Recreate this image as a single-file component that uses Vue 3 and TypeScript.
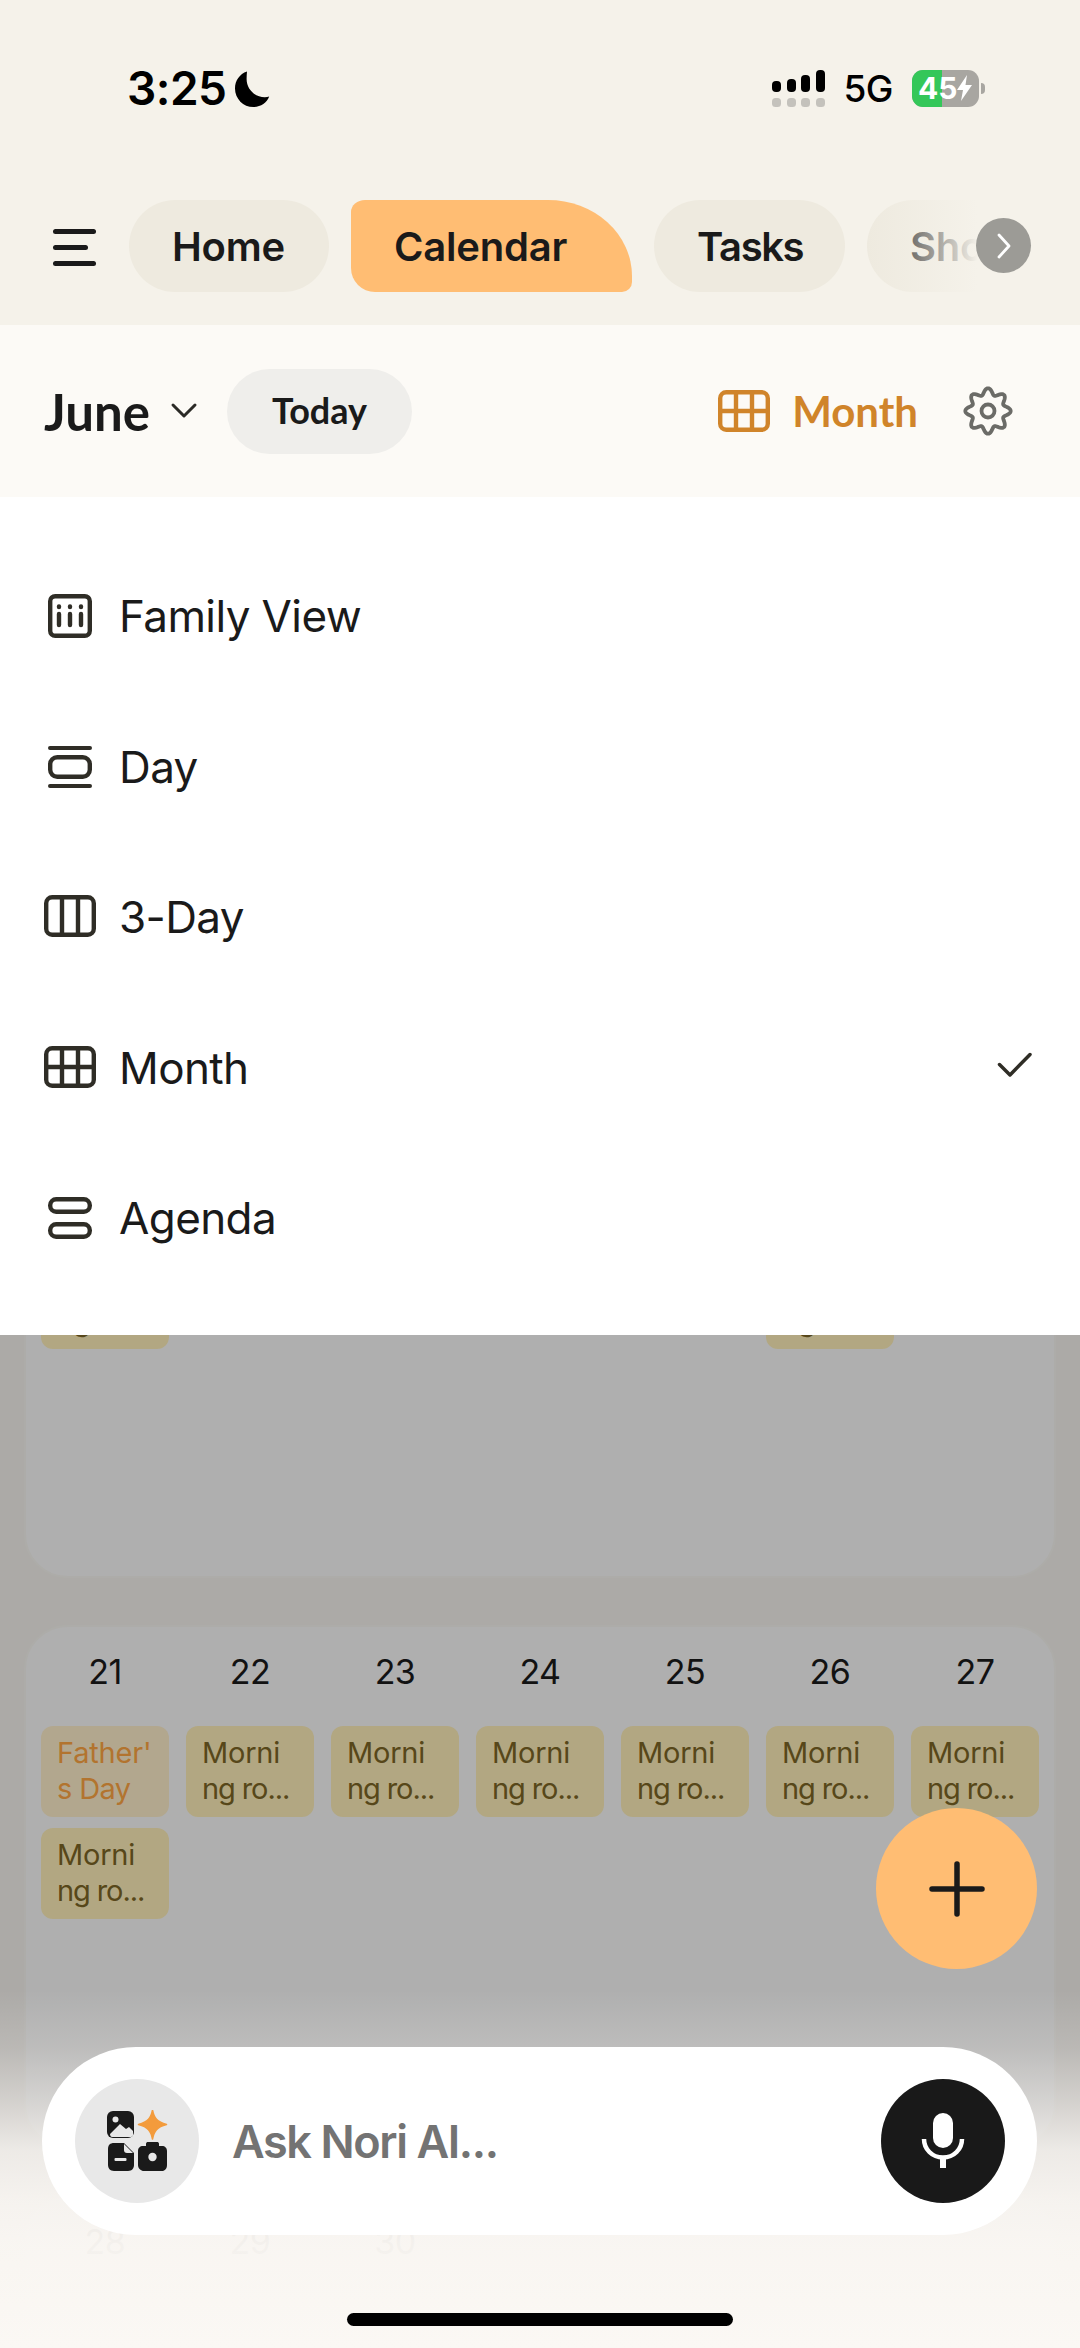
<script setup lang="ts">
const tabs = [
  { label: 'Home', cls: 'tab-home' },
  { label: 'Calendar', cls: 'tab-active' },
  { label: 'Tasks', cls: 'tab-tasks' },
]
const views = [
  { label: 'Family View', icon: 'family' },
  { label: 'Day', icon: 'day' },
  { label: '3-Day', icon: 'three' },
  { label: 'Month', icon: 'month', checked: true },
  { label: 'Agenda', icon: 'agenda' },
]
type Ev = { text: [string, string]; holiday?: boolean } | null
const morning: Ev = { text: ['Morni', 'ng ro...'] }
const fathers: Ev = { text: ["Father'", 's Day'], holiday: true }
const none: Ev[] = [null, null, null, null, null, null, null]
const weeks: { id: number; days: number[]; rows: Ev[][] }[] = [
  {
    id: 14,
    days: [],
    rows: [none, [morning, null, null, null, null, morning, null]],
  },
  {
    id: 21,
    days: [21, 22, 23, 24, 25, 26, 27],
    rows: [
      [fathers, morning, morning, morning, morning, morning, morning],
      [morning, null, null, null, null, null, null],
    ],
  },
  { id: 28, days: [28, 29, 30], rows: [] },
]

const gearPath = (() => {
  const pts: string[] = []
  for (let i = 0; i < 160; i++) {
    const a = (i / 160) * Math.PI * 2
    const r = 19.6 + 3.1 * Math.cos(8 * a)
    pts.push(`${(25 + r * Math.sin(a)).toFixed(2)} ${(25 - r * Math.cos(a)).toFixed(2)}`)
  }
  return `M${pts.join('L')}Z`
})()
</script>

<template>
  <div class="screen">
    <header class="top">
      <div class="status">
        <div class="status-left">
          <span class="time">3:25</span>
          <svg class="moon" width="36" height="38" viewBox="0 0 36 38">
            <path d="M13 1.5C5.6 4 1 10.6 1 18.4 1 28.6 9.2 37 19.4 37c7.3 0 13.4-4 15.8-10.4-1.3.4-2.8.6-4.3.6C20.8 27.2 12.6 19.2 12.6 9c0-2.700.2-5.200.4-7.500z" fill="#000" />
          </svg>
        </div>
        <div class="status-right">
          <svg class="signal" width="53" height="37" viewBox="0 0 53 37">
            <rect x="0" y="11" width="9" height="11" rx="4" fill="#000" />
            <rect x="15" y="9" width="9" height="13" rx="4" fill="#000" />
            <rect x="29" y="5" width="9" height="17" rx="4" fill="#000" />
            <rect x="44" y="0" width="9" height="22" rx="4" fill="#000" />
            <rect x="0" y="28" width="9" height="9" rx="3.5" fill="#c4c2bc" />
            <rect x="15" y="28" width="9" height="9" rx="3.5" fill="#c4c2bc" />
            <rect x="29" y="28" width="9" height="9" rx="3.5" fill="#c4c2bc" />
            <rect x="44" y="28" width="9" height="9" rx="3.5" fill="#c4c2bc" />
          </svg>
          <span class="net">5G</span>
          <div class="battery">
            <span class="batt-fill"></span>
            <span class="batt-num">45</span>
            <svg class="bolt" width="15" height="26" viewBox="0 0 15 26">
              <path d="M10 0 0 15h6l-2 11L15 10H8.5z" fill="#fff" />
            </svg>
            <span class="batt-cap"></span>
          </div>
        </div>
      </div>
      <nav class="tabs">
        <button class="menu-btn" aria-label="Menu">
          <span></span><span class="short"></span><span></span>
        </button>
        <div v-for="t in tabs" :key="t.label" class="tab" :class="t.cls">{{ t.label }}</div>
        <div class="tab tab-more">Shop</div>
        <div class="tab-fade"></div>
        <div class="tab-next">
          <svg width="16" height="28" viewBox="0 0 16 28">
            <path d="M3 3l10 11L3 25" fill="none" stroke="#fff" stroke-width="2.8" stroke-linecap="round" stroke-linejoin="round" />
          </svg>
        </div>
      </nav>
    </header>

    <section class="subbar">
      <div class="month-pick">
        <span class="month-name">June</span>
        <svg width="28" height="18" viewBox="0 0 28 18">
          <path d="M3 3l11 11L25 3" fill="none" stroke="#2b2a26" stroke-width="3" stroke-linecap="round" stroke-linejoin="round" />
        </svg>
      </div>
      <div class="today">Today</div>
      <div class="spacer"></div>
      <div class="view-pick">
        <svg width="52" height="42" viewBox="0 0 52 42">
          <g fill="none" stroke="#d0842a" stroke-width="4.4">
            <rect x="2.2" y="2.2" width="47.6" height="37.6" rx="6" />
            <path d="M18 2v38M34 2v38M2 21h48" />
          </g>
        </svg>
        <span>Month</span>
      </div>
      <svg class="gear" width="50" height="50" viewBox="0 0 50 50">
        <g fill="none" stroke="#6b6b67" stroke-width="3.8" stroke-linejoin="round">
          <path :d="gearPath" />
          <circle cx="25" cy="25" r="6.5" />
        </g>
      </svg>
    </section>

    <main class="calendar">
      <div v-for="w in weeks" :key="w.id" class="week">
        <div class="dates">
          <span v-for="d in w.days" :key="d" class="date">{{ d }}</span>
        </div>
        <div v-for="(row, ri) in w.rows" :key="ri" class="ev-row">
          <template v-for="(ev, ci) in row" :key="ci">
            <div v-if="ev" class="event" :class="{ holiday: ev.holiday }">
              <span>{{ ev.text[0] }}</span><span class="tail">{{ ev.text[1] }}</span>
            </div>
            <div v-else></div>
          </template>
        </div>
      </div>
    </main>

    <div class="scrim"></div>

    <ul class="view-menu">
      <li v-for="v in views" :key="v.label" class="view-row">
        <span class="view-icon">
          <svg width="52" height="44" viewBox="0 0 52 44">
            <g fill="none" stroke="#2f2d26" stroke-width="4.4">
              <template v-if="v.icon === 'family'">
                <rect x="6.2" y="2.2" width="39.6" height="39.6" rx="5" />
                <path d="M15 20v11M26 20v11M37 20v11" stroke-linecap="round" />
                <path d="M15 12.5v.5M26 12.5v.5M37 12.5v.5" stroke-linecap="round" />
              </template>
              <template v-else-if="v.icon === 'day'">
                <path d="M6 3h40M6 41h40" stroke-linecap="round" stroke-width="4" />
                <rect x="6.2" y="12.2" width="39.6" height="19.6" rx="7" />
              </template>
              <template v-else-if="v.icon === 'three'">
                <rect x="2.2" y="2.2" width="47.6" height="37.6" rx="6" />
                <path d="M18 2v38M34 2v38" />
              </template>
              <template v-else-if="v.icon === 'month'">
                <rect x="2.2" y="2.2" width="47.6" height="37.6" rx="6" />
                <path d="M18 2v38M34 2v38M2 21h48" />
              </template>
              <template v-else>
                <rect x="6.2" y="3.2" width="39.6" height="12.6" rx="6" />
                <rect x="6.2" y="28.2" width="39.6" height="12.6" rx="6" />
              </template>
            </g>
          </svg>
        </span>
        <span class="view-label">{{ v.label }}</span>
        <svg v-if="v.checked" class="check" width="36" height="28" viewBox="0 0 36 28">
          <path d="M2.5 13.5 13 24 33 3.5" fill="none" stroke="#2f2d26" stroke-width="3.5" stroke-linecap="round" stroke-linejoin="round" />
        </svg>
      </li>
    </ul>

    <button class="fab" aria-label="Add">
      <svg width="56" height="56" viewBox="0 0 56 56">
        <path d="M28 3v50M3 28h50" stroke="#1a1a1a" stroke-width="5.5" stroke-linecap="round" />
      </svg>
    </button>

    <div class="fade"></div>

    <div class="ask">
      <div class="ask-tools">
        <svg width="62" height="62" viewBox="0 0 62 62">
          <rect x="1" y="1" width="27" height="27" rx="6" fill="#1a1a1a" />
          <circle cx="9.5" cy="9.5" r="3" fill="#e8e8e8" />
          <path d="M4 24l10-10 6 5 3-2 4 4v4c0 1-1 2-2 2H6c-1 0-2-1-2-3z" fill="#e8e8e8" />
          <path d="M46.5 0c1.500 8 4.500 12 14 14.500-9.500 2.500-12.500 6.500-14 14.500-1.500-8-4.500-12-14-14.500 9.500-2.500 12.500-6.500 14-14.500z" fill="#f39b3c" stroke="#f39b3c" stroke-width="1.5" stroke-linejoin="round" />
          <path d="M8 33h10l10 10v12c0 3-2 6-6 6H8c-4 0-6-3-6-6V39c0-4 2-6 6-6z" fill="#1a1a1a" />
          <path d="M18 34v6c0 2 1 3 3 3h6z" fill="#e8e8e8" />
          <rect x="8.5" y="48" width="12" height="3" rx="1" fill="#e8e8e8" />
          <path d="M40 34c0-1.500 1-2 2-2h9c1 0 2 .5 2 2v2h3c3 0 5 2 5 5v14c0 3.500-2 6-5 6H38c-3 0-6-2.500-6-6V41c0-3 2-5 5-5h3z" fill="#1a1a1a" />
          <circle cx="46.5" cy="47" r="4.2" fill="#e8e8e8" />
        </svg>
      </div>
      <span class="ask-text">Ask Nori AI...</span>
      <div class="ask-mic">
        <svg width="44" height="58" viewBox="0 0 44 58">
          <rect x="12" y="1" width="20" height="35" rx="10" fill="#fff" />
          <path d="M3 27c0 10 8 18.5 19 18.5S41 37 41 27" fill="none" stroke="#fff" stroke-width="4.5" />
          <path d="M22 45v11" stroke="#fff" stroke-width="6" />
        </svg>
      </div>
    </div>

    <div class="home-bar"></div>
  </div>
</template>

<style>
html, body { margin: 0; padding: 0; }
</style>

<style scoped>
.screen {
  position: relative;
  width: 1080px;
  height: 2348px;
  overflow: hidden;
  background: #f6f4ef;
  font-family: Inter, "Liberation Sans", sans-serif;
  color: #1a1a1a;
}
.top { height: 325px; display: flex; flex-direction: column; background: #f5f2ea; }
.status {
  height: 200px;
  box-sizing: border-box;
  padding: 60px 0 0 127px;
  display: flex;
  align-items: flex-start;
  justify-content: space-between;
}
.status-left { display: flex; align-items: center; gap: 7px; height: 56px; }
.time { font-size: 46px; font-weight: 600; color: #000; letter-spacing: -0.5px; }
.moon { margin-top: 2px; }
.status-right { display: flex; align-items: center; padding-right: 101px; height: 56px; }
.net { font-size: 37px; font-weight: 500; color: #000; margin-left: 18px; letter-spacing: -0.5px; }
.battery {
  position: relative;
  margin-left: 19px;
  width: 67px;
  height: 37px;
  border-radius: 11px;
  background: #a8a6a1;
  display: flex;
  align-items: center;
  padding-left: 6px;
  box-sizing: border-box;
}
.batt-fill {
  position: absolute;
  left: 0; top: 0; bottom: 0;
  width: 30px;
  background: #34c759;
  border-radius: 11px 0 0 11px;
}
.batt-num { position: relative; font-size: 30px; font-weight: 700; color: #fff; line-height: 1; }
.bolt { position: relative; }
.batt-cap {
  position: absolute;
  right: -6px; top: 13px;
  width: 4px; height: 11px;
  background: #a8a6a1;
  border-radius: 0 4px 4px 0;
}

.tabs { position: relative; display: flex; align-items: flex-start; gap: 22px; padding-left: 53px; overflow: hidden; height: 92px; }
.menu-btn {
  width: 43px; height: 92px; margin-right: 11px; padding: 2px 0 0; border: 0; background: none;
  display: flex; flex-direction: column; justify-content: center; gap: 11px; flex: none;
}
.menu-btn span { display: block; width: 43px; height: 5px; border-radius: 3px; background: #1a1a1a; }
.menu-btn .short { width: 35px; }
.tab {
  flex: none;
  height: 92px;
  box-sizing: border-box;
  display: flex;
  align-items: center;
  padding-left: 43px;
  border-radius: 46px;
  background: #eeeadf;
  font-size: 40px;
  font-weight: 600;
  letter-spacing: -0.2px;
}
.tab-home { width: 200px; }
.tab-tasks { width: 191px; letter-spacing: -1.4px; }
.tab-active {
  width: 281px;
  background: #ffbd73;
  border-radius: 14px 84px 10px 24px / 12px 76px 10px 24px;
}
.tab-more { width: 200px; }
.tab-fade {
  position: absolute;
  left: 866px; right: 0; top: 0; bottom: 0;
  background: linear-gradient(90deg, rgba(245,242,234,0) 0, #f5f2ea 112px);
}
.tab-next {
  position: absolute;
  left: 976px; top: 18px;
  width: 55px; height: 55px;
  border-radius: 50%;
  background: #9c9b96;
  display: flex; align-items: center; justify-content: center;
}

.subbar {
  height: 172px;
  box-sizing: border-box;
  background: #fcfaf6;
  display: flex;
  align-items: center;
  padding: 0 67px 0 44px;
  position: relative;
  z-index: 3;
}
.month-pick { display: flex; align-items: center; gap: 20px; }
.month-name { font-family: Lato, Inter, sans-serif; font-size: 51px; font-weight: 700; }
.today {
  margin-left: 29px;
  width: 185px; height: 85px;
  padding-bottom: 2px;
  box-sizing: border-box;
  border-radius: 43px;
  background: #efeeeb;
  display: flex; align-items: center; justify-content: center;
  font-family: Lato, Inter, sans-serif;
  font-size: 36px; font-weight: 700;
}
.spacer { flex: 1; }
.view-pick { display: flex; align-items: center; gap: 22px; color: #d0842a; font-family: Lato, Inter, sans-serif; font-size: 42px; font-weight: 700; }
.gear { margin-left: 45px; }

.calendar {
  position: absolute;
  left: 24px; right: 24px; top: 1055px;
  display: flex; flex-direction: column; gap: 47px;
}
.week {
  height: 523px;
  box-sizing: border-box;
  border-radius: 44px;
  background: #fbfbfb;
  border: 2px solid #f8f7f2;
  padding: 26px 15px 0;
  display: flex; flex-direction: column; gap: 11px;
}
.dates { display: grid; grid-template-columns: repeat(7, 128px); column-gap: 17px; height: 62px; flex: none; }
.date { text-align: center; font-size: 34px; line-height: 38px; color: #1a1a1a; letter-spacing: -0.5px; }
.ev-row { display: grid; grid-template-columns: repeat(7, 128px); column-gap: 17px; min-height: 91px; }
.event {
  height: 91px;
  box-sizing: border-box;
  padding: 9px 0 0 16px;
  border-radius: 12px;
  background: #fff0ba;
  color: #7d6626;
  font-size: 29px;
  letter-spacing: -0.2px;
  line-height: 36px;
  display: flex; flex-direction: column;
  white-space: nowrap;
  overflow: hidden;
}
.tail { letter-spacing: -1.1px; }
.event.holiday { background: #ffefcc; color: #ffa744; }
.event.holiday .tail { letter-spacing: -0.6px; }

.scrim { position: absolute; left: 0; right: 0; top: 497px; bottom: 0; background: rgba(0,0,0,.3); }

.view-menu {
  position: absolute;
  left: 0; right: 0; top: 497px;
  height: 838px;
  margin: 0;
  padding: 44px 0 0;
  box-sizing: border-box;
  list-style: none;
  background: #fff;
  z-index: 2;
}
.view-row { height: 150.5px; display: flex; align-items: center; padding: 0 44px; }
.view-icon { width: 75px; display: flex; }
.view-label { font-size: 44px; color: #1a1a1a; flex: 1; letter-spacing: -0.6px; }
.check { margin: -6px 3.5px 0 0; }

.fab {
  position: absolute;
  left: 876px; top: 1808px;
  width: 161px; height: 161px;
  padding: 0; border: 0;
  border-radius: 50%;
  background: #ffbd73;
  display: flex; align-items: center; justify-content: center;
}
.fade {
  position: absolute;
  left: 0; right: 0; top: 1990px; bottom: 0;
  background: linear-gradient(180deg, rgba(251,248,244,0) 0, rgba(251,248,244,.18) 57px, rgba(251,248,244,.49) 110px, rgba(251,248,244,.82) 160px, rgba(251,248,244,.93) 210px, rgba(251,248,244,.97) 255px, #fbf8f4 100%);
}
.ask {
  position: absolute;
  left: 42px; top: 2047px;
  width: 995px; height: 188px;
  box-sizing: border-box;
  border-radius: 94px;
  background: #fff;
  display: flex; align-items: center;
  padding: 0 32px 0 33px;
}
.ask-tools {
  width: 124px; height: 124px; border-radius: 50%;
  background: #e8e8e8;
  display: flex; align-items: center; justify-content: center;
  flex: none;
}
.ask-text { flex: 1; margin-left: 33px; font-size: 45px; font-weight: 600; color: #737373; letter-spacing: -1.4px; }
.ask-mic {
  width: 124px; height: 124px; border-radius: 50%;
  background: #191919;
  display: flex; align-items: center; justify-content: center;
  flex: none;
}
.home-bar {
  position: absolute;
  left: 347px; top: 2313px;
  width: 386px; height: 13px;
  border-radius: 7px;
  background: #000;
}
</style>
